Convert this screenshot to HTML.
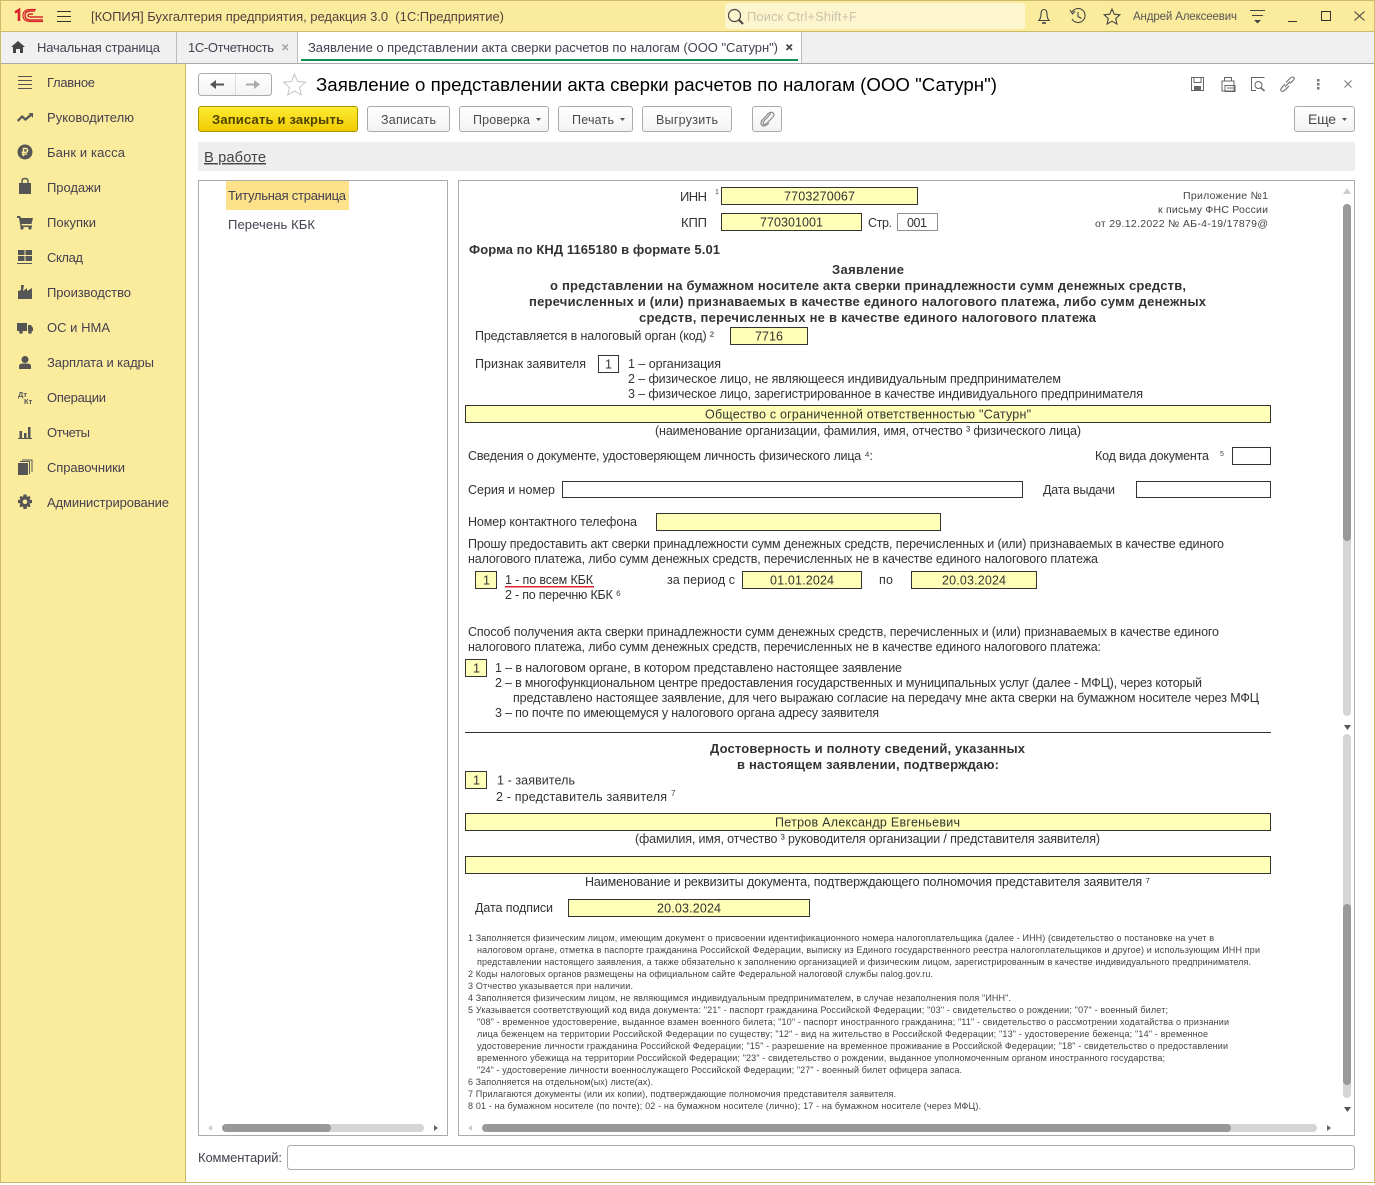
<!DOCTYPE html>
<html lang="ru"><head><meta charset="utf-8"><title>1С</title>
<style>
html,body{margin:0;padding:0;background:#fff;width:1375px;height:1185px;overflow:hidden}
svg{display:block;position:absolute;left:0;top:0}
text{font-family:"Liberation Sans",Arial,sans-serif;white-space:pre}
.m{font-size:13px;fill:#45404f}
.f{font-size:12.5px;fill:#333}
.b{font-size:13px;font-weight:bold;fill:#333}
.n{font-size:9px;fill:#444}
.r{font-size:10.5px;fill:#444}
.btn{font-size:12.5px;fill:#4a4a4a}
.fld{fill:#ffffb8;stroke:#333;stroke-width:1}
.box{fill:#fff;stroke:#333;stroke-width:1}
.ic{fill:none;stroke:#555;stroke-width:1.2}
.s{fill:#555}
</style></head><body>
<svg width="1375" height="1185" viewBox="0 0 1375 1185" xmlns="http://www.w3.org/2000/svg">
<defs>
<linearGradient id="gy" x1="0" y1="0" x2="0" y2="1"><stop offset="0" stop-color="#ffec35"/><stop offset="1" stop-color="#f0cb00"/></linearGradient>
<linearGradient id="gw" x1="0" y1="0" x2="0" y2="1"><stop offset="0" stop-color="#ffffff"/><stop offset="1" stop-color="#f3f3f3"/></linearGradient>
</defs>
<rect width="1375" height="1185" fill="#fff"/>
<!-- header -->
<rect x="0" y="0" width="1375" height="32" fill="#fbec9d"/>
<rect x="0" y="0" width="1375" height="1" fill="#cdbb6c"/>
<rect x="0" y="31" width="1375" height="1" fill="#cdbb6c"/>
<!-- logo -->
<g fill="none" stroke="#d7262b">
<path d="M15 12.5L19 10V21" stroke-width="2.6"/>
<path d="M35 11H30.5Q25 11 25 15.5T30.5 20H43" stroke-width="1.4"/>
<path d="M36 9.5H30.5Q23 9.5 23 15.5T30.5 21.5H43" stroke-width="1.2"/>
<path d="M33 14H30.5Q28 14 28 15.5T30.5 17H43" stroke-width="1.4"/>
</g>
<g fill="#333"><rect x="57" y="11" width="14" height="1"/><rect x="57" y="16" width="14" height="1"/><rect x="57" y="21" width="14" height="1"/></g>
<text x="91" y="21" class="m" style="fill:#54403f" textLength="413">[КОПИЯ] Бухгалтерия предприятия, редакция 3.0  (1С:Предприятие)</text>
<rect x="725" y="3" width="300" height="26" rx="3" fill="#fdf5cd"/>
<circle cx="734.5" cy="15.5" r="6" fill="none" stroke="#444" stroke-width="1.2"/><path d="M739 20L743 24" stroke="#444" stroke-width="2"/>
<text x="747" y="21" class="m" style="fill:#c9c4ab" textLength="110">Поиск Ctrl+Shift+F</text>
<!-- header icons -->
<g fill="none" stroke="#444" stroke-width="1.1">
<path d="M1038 20.5H1050M1039 20.5Q1041 18 1041 14Q1041 9.5 1044 9.5Q1047 9.5 1047 14Q1047 18 1049 20.5"/><path d="M1042 23H1046" stroke-width="1.6"/>
<path d="M1072 12A7 7 0 1 1 1072 19M1078 12V16.5L1081.5 18.5"/><path d="M1070 10L1072.5 14L1075 11"/>
<path d="M1112 9L1114.3 14.2L1119.8 14.8L1115.7 18.6L1116.9 24L1112 21.2L1107.1 24L1108.3 18.6L1104.2 14.8L1109.7 14.2Z"/>
</g>
<text x="1133" y="20" style="font-size:11.5px;fill:#555" textLength="104">Андрей Алексеевич</text>
<g fill="#444"><rect x="1250" y="10" width="15" height="1"/><rect x="1252" y="15" width="11" height="1"/><path d="M1254 20H1261L1257.5 23.5Z"/></g>
<rect x="1288" y="21" width="9" height="1" fill="#333"/>
<rect x="1321.5" y="11.5" width="9" height="9" fill="none" stroke="#333"/>
<path d="M1354.5 11.5L1364.5 20.5M1364.5 11.5L1354.5 20.5" stroke="#444" stroke-width="1.1"/>
<!-- tabs -->
<rect x="0" y="32" width="1375" height="32" fill="#f0f0f0"/>
<rect x="298" y="32" width="503" height="31" fill="#fff"/>
<rect x="0" y="63" width="1375" height="1" fill="#aaa"/>
<rect x="176" y="32" width="1" height="31" fill="#bbb"/><rect x="297" y="32" width="1" height="31" fill="#bbb"/><rect x="801" y="32" width="1" height="31" fill="#bbb"/>
<rect x="301" y="59" width="497" height="2" fill="#0b8f4c"/>
<path d="M11 47L18 41L25 47H23V53H20V49H16V53H13V47Z" fill="#444"/>
<text x="37" y="52" class="m" textLength="123">Начальная страница</text>
<text x="188" y="52" class="m" textLength="86">1С-Отчетность</text>
<path d="M282.5 44.5L288 50M288 44.5L282.5 50" stroke="#aaa" stroke-width="1.6"/>
<text x="308" y="52" class="m" textLength="470">Заявление о представлении акта сверки расчетов по налогам (ООО "Сатурн")</text>
<path d="M786.5 44.5L792 50M792 44.5L786.5 50" stroke="#444" stroke-width="1.6"/>
<!-- sidebar -->
<rect x="0" y="64" width="185" height="1119" fill="#fbec9d"/>
<rect x="185" y="64" width="1" height="1119" fill="#c9b866"/>
<rect x="0" y="0" width="1" height="1183" fill="#cdbb6c"/>
<rect x="1374" y="0" width="1" height="1183" fill="#cdbb6c"/>
<rect x="0" y="1182" width="1375" height="1" fill="#cdbb6c"/>
<text x="47" y="87" class="m" textLength="48">Главное</text>
<text x="47" y="122" class="m" textLength="87">Руководителю</text>
<text x="47" y="157" class="m" textLength="78">Банк и касса</text>
<text x="47" y="192" class="m" textLength="54">Продажи</text>
<text x="47" y="227" class="m" textLength="49">Покупки</text>
<text x="47" y="262" class="m" textLength="36">Склад</text>
<text x="47" y="297" class="m" textLength="84">Производство</text>
<text x="47" y="332" class="m" textLength="63">ОС и НМА</text>
<text x="47" y="367" class="m" textLength="107">Зарплата и кадры</text>
<text x="47" y="402" class="m" textLength="59">Операции</text>
<text x="47" y="437" class="m" textLength="43">Отчеты</text>
<text x="47" y="472" class="m" textLength="78">Справочники</text>
<text x="47" y="507" class="m" textLength="122">Администрирование</text>
<!-- sidebar icons -->
<g class="s">
<rect x="18" y="76" width="14" height="1"/><rect x="18" y="80" width="14" height="1"/><rect x="18" y="84" width="14" height="1"/><rect x="18" y="88" width="14" height="1"/>
<path d="M17 120L22 115L25.5 118L30 114L28 113H33V118L31.5 116L25.5 121L22 118L18.5 122Z"/>
<circle cx="25" cy="152" r="7.5"/>
<path d="M19 183H31V194H19Z"/><path d="M22 184V181Q22 178.5 25 178.5Q28 178.5 28 181V184" fill="none" stroke="#555" stroke-width="1.4"/>
<path d="M17 216H20L21 218H33L31.5 224H21.5L22 225.5H32V227H20.5L19 218H17Z"/><circle cx="22" cy="228" r="1.6"/><circle cx="30" cy="228" r="1.6"/>
<rect x="18" y="250" width="6.5" height="5"/><rect x="25.5" y="250" width="6.5" height="5"/><rect x="18" y="256" width="6.5" height="5"/><rect x="25.5" y="256" width="6.5" height="5"/><rect x="17" y="263" width="15" height="1"/>
<path d="M18 299V291L21 290V285H24L23 291L27 288V291L32 288V299Z"/>
<path d="M17 323H27V331H17ZM28 325H31L33 328V331H28Z"/><circle cx="21" cy="332" r="1.8"/><circle cx="30" cy="332" r="1.8"/>
<circle cx="25" cy="359.5" r="3.5"/><path d="M19 369V366Q19 364 22 363.5H28Q31 364 31 366V369Z"/>
<rect x="19.5" y="431" width="2.5" height="7"/><rect x="24" y="433" width="2.5" height="5"/><rect x="28" y="427" width="2.5" height="11"/><rect x="18" y="438" width="14" height="1"/>
<rect x="18" y="463" width="10" height="12"/><path d="M29 462H30V474H29ZM31.5 460.5H32.5V472H31.5ZM20 461H30V462H20ZM22 459.5H32.5V460.5H22Z"/>
<path d="M25 494.5L26.5 494.5L27 497L29.3 496L30.5 497.2L29.5 499.5L32 500V503L29.5 503.5L30.5 506L29.3 507.2L27 506.2L26.5 509H23.5L23 506.2L20.7 507.2L19.5 506L20.5 503.5L18 503V500L20.5 499.5L19.5 497.2L20.7 496L23 497L23.5 494.5Z"/>
</g>
<text x="25" y="156" text-anchor="middle" style="font-size:11px;font-weight:bold;fill:#fbec9d">₽</text>
<circle cx="25" cy="501.8" r="2.3" fill="#fbec9d"/>
<text x="18" y="397" style="font-size:7.5px;font-weight:bold;fill:#555">Дт</text>
<text x="24" y="404" style="font-size:7.5px;font-weight:bold;fill:#555">Кт</text>
<!-- toolbar -->
<rect x="198.5" y="73.5" width="73" height="22" rx="3" fill="url(#gw)" stroke="#aaa"/>
<rect x="235" y="74" width="1" height="21" fill="#ddd"/>
<path d="M210 84.5L216 80V83.5H224V85.5H216V89Z" fill="#555"/>
<path d="M260 84.5L254 80V83.5H246V85.5H254V89Z" fill="#aaa"/>
<path d="M294.5 74L297.5 81.5L305.5 82.2L299.5 87.5L301.3 95L294.5 91L287.7 95L289.5 87.5L283.5 82.2L291.5 81.5Z" fill="#fff" stroke="#c4c4c4"/>
<text x="316" y="91" style="font-size:18.67px;fill:#000" textLength="681">Заявление о представлении акта сверки расчетов по налогам (ООО "Сатурн")</text>
<g class="ic" style="stroke:#666;stroke-width:1">
<path d="M1191.5 77.5H1203.5V90.5H1191.5ZM1194 77.5V82.5H1201V77.5"/><rect x="1194.5" y="86.5" width="6" height="4" fill="#666"/>
<path d="M1224.5 81V77.5H1231.5V81M1222 91V81H1234V91ZM1225 85.5H1235V91.5H1225ZM1227 88H1233"/>
<path d="M1256 90.5H1251.5V77.5H1264.5"/><circle cx="1258.5" cy="85" r="3.5"/><path d="M1261 88L1264.5 91" stroke-width="1.5"/>
<path d="M1285 84L1281 88.5Q1280 91 1282.5 91.5Q1284 91.5 1289 86M1290 83.5L1294 79.5Q1295 77 1292.5 77Q1291 77 1286 82.5M1285 87L1290 81.5"/>
</g>
<g fill="#777"><rect x="1317" y="79" width="2.5" height="2.5"/><rect x="1317" y="83" width="2.5" height="2.5"/><rect x="1317" y="87" width="2.5" height="2.5"/></g>
<path d="M1344.5 80.5L1351.5 87.5M1351.5 80.5L1344.5 87.5" stroke="#777" stroke-width="1"/>
<!-- buttons -->
<rect x="198.5" y="106.5" width="159" height="25" rx="2.5" fill="url(#gy)" stroke="#a99200"/>
<text x="212" y="124" style="font-size:13px;font-weight:bold;fill:#4d4200" textLength="132">Записать и закрыть</text>
<g fill="url(#gw)" stroke="#aaa">
<rect x="367.5" y="106.5" width="82" height="25" rx="2.5"/>
<rect x="459.5" y="106.5" width="89" height="25" rx="2.5"/>
<rect x="558.5" y="106.5" width="74" height="25" rx="2.5"/>
<rect x="642.5" y="106.5" width="89" height="25" rx="2.5"/>
<rect x="752.5" y="106.5" width="29" height="25" rx="2.5"/>
<rect x="1294.5" y="106.5" width="60" height="25" rx="2.5"/>
</g>
<text x="381" y="124" class="btn" textLength="55">Записать</text>
<text x="473" y="124" class="btn" textLength="57">Проверка</text>
<path d="M536 118H541L538.5 121Z" fill="#555"/>
<text x="572" y="124" class="btn" textLength="42">Печать</text>
<path d="M620 118H625L622.5 121Z" fill="#555"/>
<text x="656" y="124" class="btn" textLength="62">Выгрузить</text>
<path d="M771 113.5L764 121Q762 124 764.5 124.5Q766 124.500 773 117Q775 114 772.5 112.5Q770 111.5 767 115L761.5 121Q760 125 763.5 126Q766 126 769 123" fill="none" stroke="#888" stroke-width="1.2"/>
<text x="1308" y="124" style="font-size:14px;fill:#4a4a4a" textLength="28">Еще</text>
<path d="M1342 118H1347L1344.5 121Z" fill="#555"/>
<!-- band -->
<rect x="198" y="142" width="1157" height="29" fill="#eee"/>
<text x="204" y="162" style="font-size:14.67px;fill:#444;text-decoration:underline" textLength="62">В работе</text>
<!-- left panel -->
<rect x="198.5" y="180.5" width="249" height="955" fill="#fff" stroke="#aaa"/>
<rect x="226" y="181" width="123" height="29" fill="#fde28b"/>
<text x="228" y="200" class="m" textLength="118">Титульная страница</text>
<text x="228" y="229" class="m" textLength="87">Перечень КБК</text>
<rect x="222" y="1124" width="202" height="8" rx="4" fill="#d5d5d5"/>
<rect x="222" y="1124" width="109" height="8" rx="4" fill="#999"/>
<path d="M208 1128L212 1125V1131Z" fill="#ccc"/><path d="M438 1128L434 1125V1131Z" fill="#666"/>
<!-- right panel -->
<rect x="458.5" y="180.5" width="896" height="955" fill="#fff" stroke="#aaa"/>
<path d="M1347 188L1351 194H1343Z" fill="#ccc"/>
<rect x="1343" y="204" width="8" height="512" rx="4" fill="#d5d5d5"/>
<rect x="1343" y="204" width="8" height="337" rx="4" fill="#999"/>
<path d="M1344 725H1351L1347.5 730Z" fill="#555"/>
<rect x="1343" y="734" width="8" height="364" rx="4" fill="#d5d5d5"/>
<rect x="1343" y="904" width="8" height="181" rx="4" fill="#999"/>
<path d="M1344 1107H1351L1347.5 1112Z" fill="#555"/>
<path d="M468 1128L472 1125V1131Z" fill="#ccc"/>
<rect x="482" y="1124" width="835" height="8" rx="4" fill="#d5d5d5"/>
<rect x="482" y="1124" width="749" height="8" rx="4" fill="#999"/>
<path d="M1331 1128L1327 1125V1131Z" fill="#666"/>
<!-- form fields -->
<rect class="fld" x="721.5" y="187.5" width="196" height="17"/>
<rect class="fld" x="721.5" y="213.5" width="140" height="17"/>
<rect x="897.5" y="213.5" width="40" height="17" fill="#fff" stroke="#222" stroke-dasharray="1 1"/>
<rect class="fld" x="730.5" y="327.5" width="77" height="17"/>
<rect class="box" x="598.5" y="355.5" width="20" height="17"/>
<rect class="fld" x="465.5" y="405.5" width="805" height="17"/>
<rect class="box" x="1232.5" y="447.5" width="38" height="17"/>
<rect class="box" x="562.5" y="481.5" width="460" height="16"/>
<rect class="box" x="1136.5" y="481.5" width="134" height="16"/>
<rect class="fld" x="656.5" y="513.5" width="284" height="17"/>
<rect class="fld" x="475.5" y="571.5" width="21" height="17"/>
<rect class="fld" x="742.5" y="571.5" width="119" height="17"/>
<rect class="fld" x="911.5" y="571.5" width="125" height="17"/>
<rect class="fld" x="465.5" y="659.5" width="21" height="17"/>
<rect x="465" y="732" width="806" height="1" fill="#333"/>
<rect class="fld" x="465.5" y="771.5" width="21" height="17"/>
<rect class="fld" x="465.5" y="813.5" width="805" height="17"/>
<rect class="fld" x="465.5" y="856.5" width="805" height="17"/>
<rect class="fld" x="568.5" y="899.5" width="241" height="17"/>
<rect x="505" y="586" width="89" height="1.5" fill="#e0202a"/>
<!-- form text -->
<text x="680" y="201" class="f" style="font-size:13px" textLength="27">ИНН</text>
<text x="715" y="194" style="font-size:7px;fill:#444">1</text>
<text x="784" y="200.5" class="f" textLength="71">7703270067</text>
<text x="681" y="227" class="f" style="font-size:13px" textLength="26">КПП</text>
<text x="760" y="226.500" class="f" textLength="63">770301001</text>
<text x="868" y="227" class="f" textLength="24">Стр.</text>
<text x="907" y="227" class="f" textLength="20">001</text>
<text x="1183" y="199" class="r" textLength="85">Приложение №1</text>
<text x="1158" y="213" class="r" textLength="110">к письму ФНС России</text>
<text x="1095" y="227" class="r" textLength="173">от 29.12.2022 № АБ-4-19/17879@</text>
<text x="469" y="254" class="b" textLength="251">Форма по КНД 1165180 в формате 5.01</text>
<text x="832" y="274" class="b" textLength="72">Заявление</text>
<text x="550" y="290" class="b" textLength="636">о представлении на бумажном носителе акта сверки принадлежности сумм денежных средств,</text>
<text x="529" y="306" class="b" textLength="677">перечисленных и (или) признаваемых в качестве единого налогового платежа, либо сумм денежных</text>
<text x="639" y="322" class="b" textLength="457">средств, перечисленных не в качестве единого налогового платежа</text>
<text x="475" y="340" class="f" textLength="239">Представляется в налоговый орган (код) ²</text>
<text x="755" y="340.5" class="f" textLength="28">7716</text>
<text x="475" y="368" class="f" textLength="111">Признак заявителя</text>
<text x="605" y="368.5" class="f">1</text>
<text x="628" y="368" class="f" textLength="93">1 – организация</text>
<text x="628" y="383" class="f" textLength="433">2 – физическое лицо, не являющееся индивидуальным предпринимателем</text>
<text x="628" y="398" class="f" textLength="515">3 – физическое лицо, зарегистрированное в качестве индивидуального предпринимателя</text>
<text x="705" y="418.5" class="f" textLength="326">Общество с ограниченной ответственностью "Сатурн"</text>
<text x="655" y="435" class="f" textLength="426">(наименование организации, фамилия, имя, отчество ³ физического лица)</text>
<text x="468" y="460" class="f" textLength="405">Сведения о документе, удостоверяющем личность физического лица ⁴:</text>
<text x="1095" y="460" class="f" textLength="114">Код вида документа</text>
<text x="1220" y="456" style="font-size:7px;fill:#444">5</text>
<text x="468" y="494" class="f" textLength="87">Серия и номер</text>
<text x="1043" y="494" class="f" textLength="72">Дата выдачи</text>
<text x="468" y="526" class="f" textLength="169">Номер контактного телефона</text>
<text x="468" y="548" class="f" textLength="756">Прошу предоставить акт сверки принадлежности сумм денежных средств, перечисленных и (или) признаваемых в качестве единого</text>
<text x="468" y="563" class="f" textLength="630">налогового платежа, либо сумм денежных средств, перечисленных не в качестве единого налогового платежа</text>
<text x="483" y="584.5" class="f">1</text>
<text x="505" y="584" class="f" textLength="88">1 - по всем КБК</text>
<text x="505" y="599" class="f" textLength="116">2 - по перечню КБК ⁶</text>
<text x="667" y="584" class="f" textLength="68">за период с</text>
<text x="770" y="584.5" class="f" textLength="64">01.01.2024</text>
<text x="879" y="584" class="f" textLength="14">по</text>
<text x="942" y="584.5" class="f" textLength="64">20.03.2024</text>
<text x="468" y="636" class="f" textLength="751">Способ получения акта сверки принадлежности сумм денежных средств, перечисленных и (или) признаваемых в качестве единого</text>
<text x="468" y="651" class="f" textLength="633">налогового платежа, либо сумм денежных средств, перечисленных не в качестве единого налогового платежа:</text>
<text x="473" y="672.5" class="f">1</text>
<text x="495" y="672" class="f" textLength="407">1 – в налоговом органе, в котором представлено настоящее заявление</text>
<text x="495" y="687" class="f" textLength="707">2 – в многофункциональном центре предоставления государственных и муниципальных услуг (далее - МФЦ), через который</text>
<text x="513" y="702" class="f" textLength="746">представлено настоящее заявление, для чего выражаю согласие на передачу мне акта сверки на бумажном носителе через МФЦ</text>
<text x="495" y="717" class="f" textLength="384">3 – по почте по имеющемуся у налогового органа адресу заявителя</text>
<text x="710" y="753" class="b" textLength="315">Достоверность и полноту сведений, указанных</text>
<text x="737" y="769" class="b" textLength="262">в настоящем заявлении, подтверждаю:</text>
<text x="473" y="784.5" class="f">1</text>
<text x="497" y="784.5" class="f" textLength="78">1 - заявитель</text>
<text x="496" y="801" class="f" textLength="171">2 - представитель заявителя</text>
<text x="671" y="796" style="font-size:8px;fill:#444">7</text>
<text x="775" y="826.5" class="f" textLength="185">Петров Александр Евгеньевич</text>
<text x="635" y="843" class="f" textLength="465">(фамилия, имя, отчество ³ руководителя организации / представителя заявителя)</text>
<text x="585" y="886" class="f" textLength="565">Наименование и реквизиты документа, подтверждающего полномочия представителя заявителя ⁷</text>
<text x="475" y="912" class="f" textLength="78">Дата подписи</text>
<text x="657" y="912.5" class="f" textLength="64">20.03.2024</text>
<!-- footnotes -->
<text x="468" y="941" class="n" textLength="746">1 Заполняется физическим лицом, имеющим документ о присвоении идентификационного номера налогоплательщика (далее - ИНН) (свидетельство о постановке на учет в</text>
<text x="477" y="953" class="n" textLength="783">налоговом органе, отметка в паспорте гражданина Российской Федерации, выписку из Единого государственного реестра налогоплательщиков и другое) и использующим ИНН при</text>
<text x="477" y="965" class="n" textLength="774">представлении настоящего заявления, а также обязательно к заполнению организацией и физическим лицом, зарегистрированным в качестве индивидуального предпринимателя.</text>
<text x="468" y="977" class="n" textLength="465">2 Коды налоговых органов размещены на официальном сайте Федеральной налоговой службы nalog.gov.ru.</text>
<text x="468" y="989" class="n" textLength="165">3 Отчество указывается при наличии.</text>
<text x="468" y="1001" class="n" textLength="543">4 Заполняется физическим лицом, не являющимся индивидуальным предпринимателем, в случае незаполнения поля "ИНН".</text>
<text x="468" y="1013" class="n" textLength="700">5 Указывается соответствующий код вида документа: "21" - паспорт гражданина Российской Федерации; "03" - свидетельство о рождении; "07" - военный билет;</text>
<text x="477" y="1025" class="n" textLength="752">"08" - временное удостоверение, выданное взамен военного билета; "10" - паспорт иностранного гражданина; "11" - свидетельство о рассмотрении ходатайства о признании</text>
<text x="477" y="1037" class="n" textLength="731">лица беженцем на территории Российской Федерации по существу; "12" - вид на жительство в Российской Федерации; "13" - удостоверение беженца; "14" - временное</text>
<text x="477" y="1049" class="n" textLength="751">удостоверение личности гражданина Российской Федерации; "15" - разрешение на временное проживание в Российской Федерации; "18" - свидетельство о предоставлении</text>
<text x="477" y="1061" class="n" textLength="688">временного убежища на территории Российской Федерации; "23" - свидетельство о рождении, выданное уполномоченным органом иностранного государства;</text>
<text x="477" y="1073" class="n" textLength="485">"24" - удостоверение личности военнослужащего Российской Федерации; "27" - военный билет офицера запаса.</text>
<text x="468" y="1085" class="n" textLength="185">6 Заполняется на отдельном(ых) листе(ах).</text>
<text x="468" y="1097" class="n" textLength="428">7 Прилагаются документы (или их копии), подтверждающие полномочия представителя заявителя.</text>
<text x="468" y="1109" class="n" textLength="513">8 01 - на бумажном носителе (по почте); 02 - на бумажном носителе (лично); 17 - на бумажном носителе (через МФЦ).</text>
<!-- comment -->
<text x="198" y="1162" class="m" textLength="84">Комментарий:</text>
<rect x="287.5" y="1145.5" width="1067" height="24" rx="3" fill="#fff" stroke="#aaa"/>
</svg>
</body></html>
